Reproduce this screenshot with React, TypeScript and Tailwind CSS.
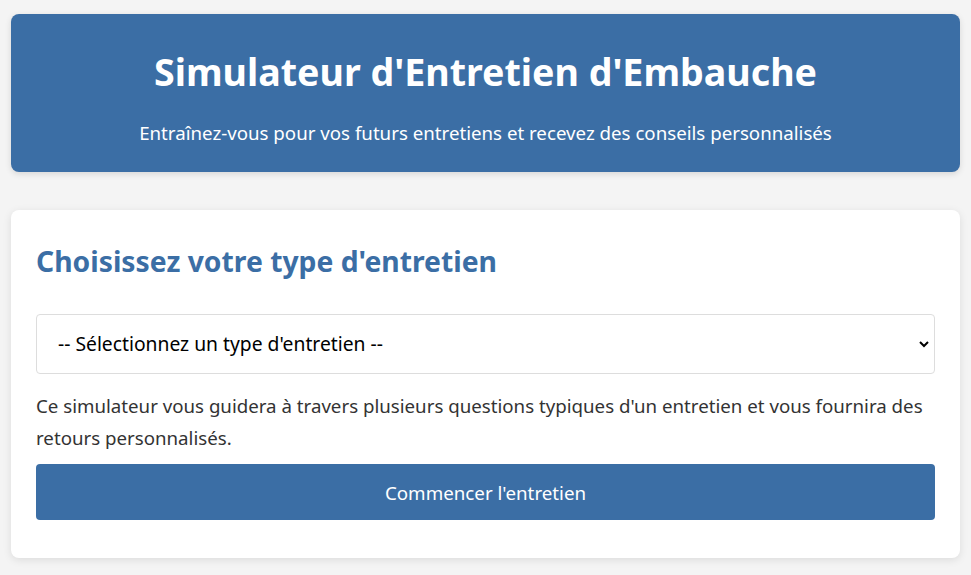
import React from "react";

export default function App() {
  return (
    <div
      className="min-h-[575px] w-full bg-[#f4f4f4] px-[11px] pt-[14px] pb-[17px]"
      style={{ fontFamily: '"Noto Sans", "Open Sans", sans-serif' }}
    >
      <header className="rounded-[8px] bg-[#3b6ea5] pt-[36px] pb-[26px] text-center text-white shadow-[0_2px_6px_rgba(0,0,0,0.12)]">
        <h1 className="text-[37.6px] font-bold leading-[44px]">Simulateur d'Entretien d'Embauche</h1>
        <p className="mt-[25px] text-[18.7px] leading-[27px]">
          Entraînez-vous pour vos futurs entretiens et recevez des conseils personnalisés
        </p>
      </header>

      <main className="mt-[38px] rounded-[8px] bg-white px-[25px] pt-[34px] pb-[38px] shadow-[0_2px_8px_rgba(0,0,0,0.1)]">
        <h2 className="text-[28.3px] font-bold leading-[34px] text-[#3b6ea5]">
          Choisissez votre type d'entretien
        </h2>
        <div className="relative mt-[36px]">
          <select
            className="h-[60px] w-full appearance-none rounded-[4px] border border-[#dddddd] bg-white pl-[21px] pr-[40px] text-[19.3px] text-black outline-none"
            style={{ fontFamily: '"Noto Sans", "Open Sans", sans-serif' }}
            defaultValue=""
          >
            <option value="">-- Sélectionnez un type d'entretien --</option>
          </select>
          <svg
            className="pointer-events-none absolute right-[6px] top-[26px]"
            width="10"
            height="8"
            viewBox="0 0 10 8"
          >
            <path d="M1 2 L5 6 L9 2" fill="none" stroke="#000" strokeWidth="2" />
          </svg>
        </div>
        <p className="mt-[16px] text-[18.7px] leading-[32px] text-[#333333]">
          Ce simulateur vous guidera à travers plusieurs questions typiques d'un entretien et vous fournira des retours personnalisés.
        </p>
        <button className="mt-[10px] flex h-[56px] w-full items-center justify-center rounded-[4px] bg-[#3b6ea5] pt-[3px] text-[18.75px] text-white">
          Commencer l'entretien
        </button>
      </main>
    </div>
  );
}
